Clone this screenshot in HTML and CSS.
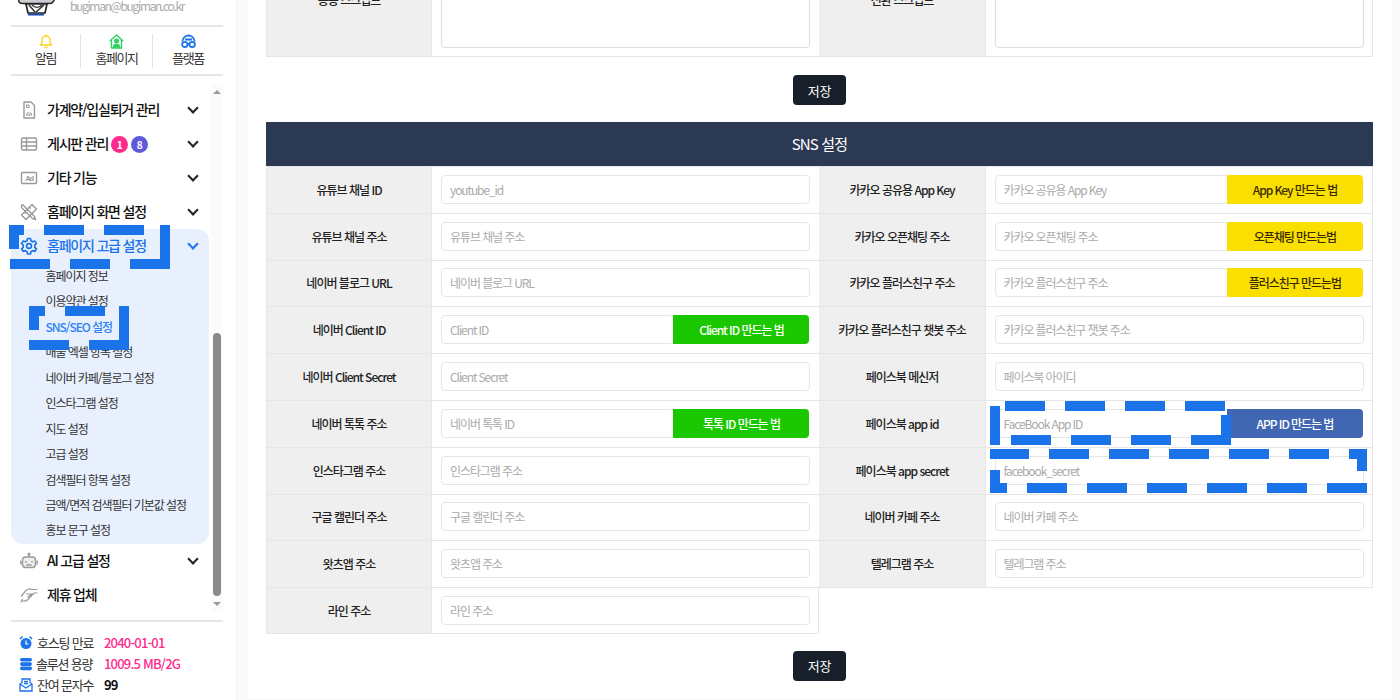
FILE: index.html
```html
<!DOCTYPE html>
<html lang="ko">
<head>
<meta charset="utf-8">
<title>SNS 설정</title>
<link rel="stylesheet" href="styles.css">
</head>
<body>
<div class="app">
  <aside class="sidebar">
    <div class="profile">
      <svg class="logo" width="40" height="16" viewBox="0 0 40 16"><path d="M1 -3h36q1 3-1 5-1 1.500-4 1.500H6Q3 3.500 2 2z" fill="#c9ccd0" stroke="#2a2a2a" stroke-width="1.500"/><path d="M9 4h21l-2 9H11z" fill="#fff" stroke="#222" stroke-width="1.700"/><path d="M12 5l6 7M27 5l-8 7M15 5c3 3 7 3 10 0" fill="none" stroke="#333" stroke-width="1.500"/><rect x="11" y="13.500" width="16" height="2" fill="#1b46a8"/></svg>
      <span class="email">bugiman@bugiman.co.kr</span>
    </div>
    <nav class="quick">
      <a class="quick-item">
        <svg width="14" height="15" viewBox="0 0 14 15" fill="none" stroke="#fbd321" stroke-width="1.400"><path d="M1.500 11h11l-1.500-2.500V6a4 4 0 0 0-8 0v2.500z" stroke-linejoin="round"/><path d="M5.500 13.500h3M7 .6v1.200"/></svg>
        <span>알림</span>
      </a>
      <a class="quick-item">
        <svg width="15" height="15" viewBox="0 0 15 15" fill="none" stroke="#2fd060" stroke-width="1.400"><path d="M.8 7L7.500 1l6.700 6M2.500 5.800V14h10V5.800" stroke-linejoin="round"/><circle cx="7.500" cy="7" r="1.800" fill="#2fd060"/><path d="M4.500 13c0-3.500 6-3.500 6 0z" fill="#2fd060"/></svg>
        <span>홈페이지</span>
      </a>
      <a class="quick-item">
        <svg width="15" height="15" viewBox="0 0 15 15" fill="none" stroke="#1a73e8" stroke-width="1.800"><circle cx="3.800" cy="10.500" r="2.700"/><circle cx="11.200" cy="10.500" r="2.700"/><path d="M6.500 10h2M1.200 7.500C2 3.500 5 1.500 7.500 1.500s5.500 2 6.300 6M4 5.500h7"/></svg>
        <span>플랫폼</span>
      </a>
    </nav>
    <div class="menu-wrap">
      <ul class="menu">
        <li class="menu-item"><svg class="mi" width="18" height="18" viewBox="0 0 18 18" fill="none" stroke="#999" stroke-width="1.400"><path d="M4 1h7l3.500 3.500V17H4z" stroke-linejoin="round"/><path d="M6.500 4h2.500v2.500H6.500zM6 14l2.200-2.800 1.500 1.500 1-1L12 14z" stroke-width="1"/></svg><span>가계약/입실퇴거 관리</span><i class="chev"></i></li>
        <li class="menu-item"><svg class="mi" width="18" height="18" viewBox="0 0 18 18" fill="none" stroke="#999" stroke-width="1.400"><rect x="1.500" y="3" width="15" height="12" rx="1.500"/><path d="M1.500 7h15M1.500 11h15M6.500 3v12"/></svg><span>게시판 관리</span><b class="badge pink">1</b><b class="badge purple">8</b><i class="chev"></i></li>
        <li class="menu-item"><svg class="mi" width="18" height="18" viewBox="0 0 18 18" fill="none" stroke="#999" stroke-width="1.400"><rect x="1.500" y="3.500" width="15" height="11" rx="1"/><text x="9" y="12" text-anchor="middle" class="ad">Ad</text></svg><span>기타 기능</span><i class="chev"></i></li>
        <li class="menu-item"><svg class="mi" width="18" height="18" viewBox="0 0 18 18" fill="none" stroke="#999" stroke-width="1.400" stroke-linejoin="round"><path d="M2.500 1.500L1.500 2.500v2l11 11 3 1-1-3z"/><path d="M12 1.500l4.500 4.500L6 16.500 1.500 12zM4.500 9l1.500 1.500M7 6.500l1.500 1.500M9.500 4l1.500 1.500"/></svg><span>홈페이지 화면 설정</span><i class="chev"></i></li>
        <li class="panel">
          <div class="menu-item active"><svg class="mi" width="18" height="18" viewBox="0 0 24 24" fill="none" stroke="#1a73e8" stroke-width="2.200" stroke-linejoin="round"><circle cx="12" cy="12" r="3.200"/><path d="M10 2h4l.6 3 2.400 1.400 2.900-1 2 3.500-2.300 2a7 7 0 0 1 0 2.800l2.300 2-2 3.500-2.900-1-2.400 1.400-.6 3h-4l-.6-3L7 18.200l-2.900 1-2-3.500 2.300-2a7 7 0 0 1 0-2.800l-2.300-2 2-3.500 2.900 1L9.400 5z"/></svg><span>홈페이지 고급 설정</span><i class="chev"></i></div>
          <ul class="sub">
            <li>홈페이지 정보</li>
            <li>이용약관 설정</li>
            <li class="on">SNS/SEO 설정</li>
            <li>매물 엑셀 항목 설정</li>
            <li>네이버 카페/블로그 설정</li>
            <li>인스타그램 설정</li>
            <li>지도 설정</li>
            <li>고급 설정</li>
            <li>검색필터 항목 설정</li>
            <li>금액/면적 검색필터 기본값 설정</li>
            <li>홍보 문구 설정</li>
          </ul>
        </li>
        <li class="menu-item"><svg class="mi" width="18" height="18" viewBox="0 0 18 18" fill="none" stroke="#999" stroke-width="1.400"><rect x="2.500" y="5" width="13" height="10.500" rx="3" fill="#eee"/><path d="M9 5V2.500M.8 8.500v4M17.200 8.500v4"/><circle cx="9" cy="2" r=".9"/><path d="M6 9v1.500M12 9v1.500M6.500 13h5" stroke-width="1.600"/></svg><span>AI 고급 설정</span><i class="chev"></i></li>
        <li class="menu-item"><svg class="mi" width="18" height="18" viewBox="0 0 18 18" fill="none" stroke="#999" stroke-width="1.200"><path d="M1 10.500L6 4.500C8 2.500 10 2.500 12 3.500H17.500M17.500 7H14L8 13.500C6 15.500 4 15.500 2 14.500M2.500 13L1 16.500M6 8H11.500L7.500 11.500"/></svg><span>제휴 업체</span></li>
      </ul>
      <div class="scroll">
        <i class="arrow up"></i>
        <i class="thumb"></i>
        <i class="arrow down"></i>
      </div>
    </div>
    <dl class="stats">
      <div class="stat"><svg width="14" height="14" viewBox="0 0 14 14"><circle cx="7" cy="7.500" r="5.500" fill="#1a73e8"/><path d="M1 3l2.500-2.500M13 3L10.500.5" stroke="#1a73e8" stroke-width="1.500"/><path d="M7 4.500v3.500h2.500" stroke="#fff" fill="none" stroke-width="1.200"/></svg><dt class="t1">호스팅 만료</dt><dd class="pinktext">2040-01-01</dd></div>
      <div class="stat"><svg width="14" height="14" viewBox="0 0 14 14" fill="#1a73e8"><rect x="1" y="1" width="12" height="3.600" rx="1.800"/><rect x="1" y="5.300" width="12" height="3.600" rx="1.800"/><rect x="1" y="9.600" width="12" height="3.600" rx="1.800"/></svg><dt class="t2">솔루션 용량</dt><dd class="pinktext">1009.5 MB/2G</dd></div>
      <div class="stat"><svg width="14" height="14" viewBox="0 0 14 14" fill="none" stroke="#1a73e8" stroke-width="1.300"><path d="M1 6l2-1.500V1h8v3.500L13 6v7H1z"/><path d="M1 6l6 4 6-4"/><path d="M5 3.500h4M5 5.500h4"/></svg><dt class="t1">잔여 문자수</dt><dd class="plain">99</dd></div>
    </dl>
  </aside>

  <main class="main">
    <div class="card">
      <section class="form first">
        <div class="lab">공통 스크립트</div><div class="val"><textarea class="area"></textarea></div>
        <div class="lab">전환 스크립트</div><div class="val"><textarea class="area"></textarea></div>
      </section>
      <div class="actions"><button class="save">저장</button></div>
      <h2 class="head">SNS 설정</h2>
      <section class="form rows">
        <div class="lab">유튜브 채널 ID</div><div class="val"><input class="inp" placeholder="youtube_id"></div>
        <div class="lab">카카오 공유용 App Key</div><div class="val"><input class="inp" placeholder="카카오 공유용 App Key"><a class="btn kakao">App Key 만드는 법</a></div>

        <div class="lab">유튜브 채널 주소</div><div class="val"><input class="inp" placeholder="유튜브 채널 주소"></div>
        <div class="lab">카카오 오픈채팅 주소</div><div class="val"><input class="inp" placeholder="카카오 오픈채팅 주소"><a class="btn kakao">오픈채팅 만드는법</a></div>

        <div class="lab">네이버 블로그 URL</div><div class="val"><input class="inp" placeholder="네이버 블로그 URL"></div>
        <div class="lab">카카오 플러스친구 주소</div><div class="val"><input class="inp" placeholder="카카오 플러스친구 주소"><a class="btn kakao">플러스친구 만드는법</a></div>

        <div class="lab">네이버 Client ID</div><div class="val"><input class="inp" placeholder="Client ID"><a class="btn naver">Client ID 만드는 법</a></div>
        <div class="lab">카카오 플러스친구 챗봇 주소</div><div class="val"><input class="inp" placeholder="카카오 플러스친구 챗봇 주소"></div>

        <div class="lab">네이버 Client Secret</div><div class="val"><input class="inp" placeholder="Client Secret"></div>
        <div class="lab">페이스북 메신저</div><div class="val"><input class="inp" placeholder="페이스북 아이디"></div>

        <div class="lab">네이버 톡톡 주소</div><div class="val"><input class="inp" placeholder="네이버 톡톡 ID"><a class="btn naver">톡톡 ID 만드는 법</a></div>
        <div class="lab">페이스북 app id</div><div class="val"><input class="inp" placeholder="FaceBook App ID"><a class="btn fb">APP ID 만드는 법</a></div>

        <div class="lab">인스타그램 주소</div><div class="val"><input class="inp" placeholder="인스타그램 주소"></div>
        <div class="lab">페이스북 app secret</div><div class="val"><input class="inp" placeholder="facebook_secret"></div>

        <div class="lab">구글 캘린더 주소</div><div class="val"><input class="inp" placeholder="구글 캘린더 주소"></div>
        <div class="lab">네이버 카페 주소</div><div class="val"><input class="inp" placeholder="네이버 카페 주소"></div>

        <div class="lab">왓츠앱 주소</div><div class="val"><input class="inp" placeholder="왓츠앱 주소"></div>
        <div class="lab">텔레그램 주소</div><div class="val"><input class="inp" placeholder="텔레그램 주소"></div>

        <div class="lab end">라인 주소</div><div class="val end left"><input class="inp" placeholder="라인 주소"></div>
        <div class="rest"></div>
      </section>
      <div class="actions"><button class="save">저장</button></div>
    </div>
  </main>

  <svg class="marks" width="1400" height="700" viewBox="0 0 1400 700" aria-hidden="true">
    <path class="dash" d="M9 225h15v10H19v14H9z M44 225h40v10H44z M104 225h40v10h-40z M160 225h10v44H130v-10h30z M70 259h40v10H70z M10 259h40v10H10z"/>
    <path class="dash" d="M29 306h16v10H39v14H29z M65 306h40v10H65z M119 306h10v44H89v-10h30z M29 340h40v10H29z"/>
    <path class="dash" d="M990 406h10v39h-10z M1005 401h40v10h-40z M1065 401h40v10h-40z M1125 401h40v10h-40z M1185 401h40v10h-40z M1221 415h10v30h-40v-10h30z M1131 435h40v10h-40z M1071 435h40v10h-40z M1011 435h40v10h-40z"/>
    <path class="dash" d="M990 449h39v10h-39z M1049 449h40v10h-40z M1109 449h40v10h-40z M1169 449h40v10h-40z M1229 449h40v10h-40z M1289 449h40v10h-40z M1349 449h18v22h-10v-12h-8z M990 470h10v13h7v10h-17z M1027 483h40v10h-40z M1087 483h40v10h-40z M1147 483h40v10h-40z M1207 483h40v10h-40z M1267 483h40v10h-40z M1327 483h40v10h-40z"/>
  </svg>
</div>
</body>
</html>
```

FILE: styles.css
```css
* { box-sizing: border-box; }
html, body { margin: 0; padding: 0; }
body {
  font-family: "Noto Sans CJK KR", "Noto Sans", sans-serif;
  color: #222;
  overflow: hidden;
}
ul, dl, dd { margin: 0; padding: 0; list-style: none; }
h2 { margin: 0; }

.app {
  position: relative;
  display: flex;
  height: 700px;
  overflow: hidden;
  background: #f9f9f9;
}

/* sidebar */
.sidebar {
  flex: none;
  width: 237px;
  display: flex;
  flex-direction: column;
  background: #fff;
  border-right: 1px solid #f1f1f1;
  padding: 0 13px 0 11px;
}
.profile {
  height: 27px;
  flex: none;
  display: flex;
  align-items: flex-start;
  border-bottom: 2px solid #e6e6e6;
}
.logo { margin-left: 6px; flex: none; }
.email {
  margin: -2px 0 0 13px;
  font-size: 12px;
  line-height: 16px;
  color: #aaa;
  letter-spacing: -1.350px;
}
.quick {
  height: 49px;
  flex: none;
  display: flex;
  padding-top: 7px;
  border-bottom: 2px solid #e6e6e6;
}
.quick-item {
  height: 34px;
  display: flex;
  flex-direction: column;
  align-items: center;
  font-size: 13px;
  line-height: 15px;
  color: #333;
  letter-spacing: -1.500px;
  gap: 1px;
}
.quick-item:nth-child(1) { width: 70px; border-right: 1px solid #e4e4e4; }
.quick-item:nth-child(2) { width: 72px; border-right: 1px solid #e4e4e4; }
.quick-item:nth-child(3) { width: 70px; }

.menu-wrap {
  position: relative;
  margin-top: 9px;
  height: 526px;
  flex: none;
  padding-top: 8px;
}
.menu { width: 198px; }
.menu-item {
  display: flex;
  align-items: center;
  height: 34px;
  padding-left: 9px;
  font-size: 14px;
  font-weight: 500;
  color: #111;
  letter-spacing: -1.200px;
}
.menu-item span { margin-top: -2px; }
.mi { flex: none; margin-right: 9px; }
.ad { font: 700 7.500px "Liberation Sans", sans-serif; fill: #999; stroke: none; }
.chev {
  width: 8px;
  height: 8px;
  margin-left: auto;
  margin-right: 12px;
  margin-top: -5px;
  border-right: 2px solid #222;
  border-bottom: 2px solid #222;
  transform: rotate(45deg);
  flex: none;
}
.badge {
  width: 17px;
  height: 17px;
  margin-left: 3px;
  border-radius: 50%;
  color: #fff;
  font-size: 10px;
  font-weight: 700;
  line-height: 17px;
  text-align: center;
  letter-spacing: 0;
}
.badge.pink { background: #ff2a8d; }
.badge.purple { background: #5f5bd8; }
.panel { background: #e8f0fe; border-radius: 12px; height: 315px; }
.active { color: #1a73e8; }
.active .chev { border-color: #1a73e8; }
.sub li {
  height: 25.450px;
  line-height: 26px;
  padding-left: 34.500px;
  font-size: 12px;
  color: #333;
  letter-spacing: -1.050px;
}
.sub .on { color: #2f80f5; font-weight: 500; }

.scroll {
  position: absolute;
  right: 0;
  top: 0;
  bottom: 0;
  width: 12px;
  background: #fbfbfb;
}
.thumb {
  position: absolute;
  left: 2px;
  top: 248px;
  width: 8px;
  height: 263px;
  border-radius: 4px;
  background: #8a8a8a;
}
.arrow {
  position: absolute;
  left: 2px;
  width: 0;
  height: 0;
  border-left: 4px solid transparent;
  border-right: 4px solid transparent;
}
.arrow.up { top: 5px; border-bottom: 4px solid #999; }
.arrow.down { bottom: 5px; border-top: 4px solid #999; }

.stats {
  flex: none;
  margin-top: 9px;
  padding: 10px 0 0 8px;
  border-top: 2px solid #e6e6e6;
}
.stat {
  display: flex;
  align-items: center;
  height: 21px;
  font-size: 13px;
  letter-spacing: -.8px;
}
.stat svg { flex: none; }
.stat dt { color: #333; letter-spacing: -1.200px; }
.t1 { margin-left: 4px; width: 67px; }
.t2 { margin-left: 3px; width: 68px; }
.pinktext { color: #ff2a8d; font-weight: 500; }
.plain { color: #111; font-weight: 700; }

/* main */
.main {
  flex: 1;
  min-width: 0;
  padding: 0 8px 1px 11px;
}
.card {
  display: flow-root;
  height: 699px;
  background: #fff;
  padding: 0 19px 0 18px;
}
.form {
  display: grid;
  grid-template-columns: 15% 35% 15% 35%;
}
.first {
  margin: -57px 0 1px;
  grid-auto-rows: 114px;
}
.rows {
  grid-auto-rows: 46.800px;
  margin-bottom: -1px;
}
.lab {
  display: flex;
  align-items: center;
  justify-content: center;
  padding-bottom: 1px;
  background: #efefef;
  border-right: 1px solid #e6e6e6;
  font-size: 12px;
  font-weight: 500;
  color: #222;
  letter-spacing: -1px;
}
.lab:nth-child(4n+1) { border-left: 1px solid #e6e6e6; }
.val {
  display: flex;
  align-items: center;
  padding: 0 9px 1px;
}
.val:nth-child(4n) { border-right: 1px solid #e6e6e6; padding-right: 8px; }
.first .val, .first .lab { padding-bottom: 0; border-bottom: 1px solid #e6e6e6; }
.rows .lab, .rows .val, .rest { border-top: 1px solid #e6e6e6; }
.rows .end { border-bottom: 1px solid #e6e6e6; }
.left { border-right: 1px solid #e6e6e6; padding-right: 8px; }
.rest { grid-column: span 2; }
.inp {
  flex: 1;
  min-width: 0;
  width: 100%;
  height: 29px;
  padding: 0 8px;
  border: 1px solid #e6e6e6;
  border-radius: 4px;
  background: #fff;
  font: 12px "Noto Sans CJK KR", sans-serif;
  letter-spacing: -1.100px;
  outline: 0;
}
.inp::placeholder { color: #aaa; opacity: 1; }
.area {
  width: 100%;
  height: 96px;
  display: block;
  border: 1px solid #ddd;
  border-radius: 4px;
  resize: none;
  background: #fff;
  outline: 0;
}
.btn {
  flex: none;
  width: 136px;
  height: 29px;
  margin: 0 1px 0 -2px;
  border-radius: 0 4px 4px 0;
  display: flex;
  align-items: center;
  justify-content: center;
  font-size: 12px;
  font-weight: 500;
  letter-spacing: -1.050px;
  color: #fff;
}
.kakao { background: #f9e000; color: #3a2a00; }
.naver { background: #1bc800; }
.fb { background: #4267b2; }
.actions {
  display: flex;
  justify-content: center;
  padding-top: 17px;
}
.rows + .actions { padding-top: 18px; }
.save {
  width: 53px;
  height: 30px;
  padding: 0;
  border: 0;
  border-radius: 4px;
  background: #171f2b;
  color: #fff;
  font: 13px "Noto Sans CJK KR", sans-serif;
  letter-spacing: -.3px;
}
.head {
  margin-top: 17px;
  height: 44px;
  background: #2b3a52;
  color: #fff;
  font-size: 15px;
  font-weight: 400;
  line-height: 44px;
  text-align: center;
  letter-spacing: -.8px;
}

/* dashed annotation outlines */
.marks { position: absolute; left: 0; top: 0; pointer-events: none; }
.dash { fill: #1a73e8; }
```
